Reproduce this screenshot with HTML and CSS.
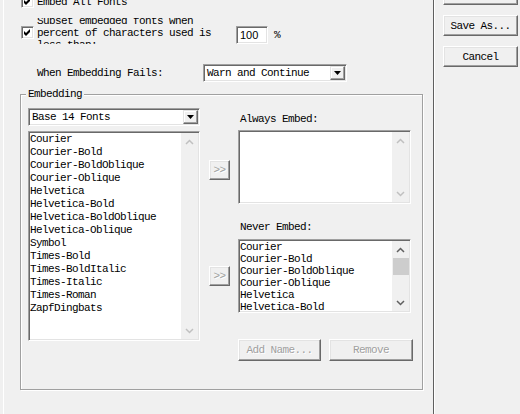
FILE: index.html
```html
<!DOCTYPE html>
<html>
<head>
<meta charset="utf-8">
<title>Fonts</title>
<link rel="stylesheet" href="styles.css">
</head>
<body>
<div class="dialog">
  <div class="panel">
    <div class="content">
      <div class="row row-embed">
        <span class="check"><svg width="9" height="9" viewBox="0 0 9 9"><polygon points="1,3 3,5 7,1 7,4 3,8 1,6" fill="#000"/></svg></span>
        <span class="label">Embed All Fonts</span>
      </div>
      <div class="row row-subset">
        <span class="check"><svg width="9" height="9" viewBox="0 0 9 9"><polygon points="1,3 3,5 7,1 7,4 3,8 1,6" fill="#000"/></svg></span>
        <div class="clip"><div class="clip-text">Subset embedded fonts when<br>percent of characters used is<br>less than:</div></div>
        <span class="textbox">100</span>
        <span class="pct">%</span>
      </div>
      <div class="row row-fails">
        <span class="fails-label">When Embedding Fails:</span>
        <div class="combo combo-fails">
          <span class="combo-text">Warn and Continue</span>
          <span class="combo-btn"><svg width="7" height="4" viewBox="0 0 7 4"><path d="M0 0h7L3.5 4z" fill="#000"/></svg></span>
        </div>
      </div>
      <fieldset class="group">
        <legend>Embedding</legend>
        <div class="group-body">
          <div class="col-left">
            <div class="combo combo-base">
              <span class="combo-text">Base 14 Fonts</span>
              <span class="combo-btn"><svg width="7" height="4" viewBox="0 0 7 4"><path d="M0 0h7L3.5 4z" fill="#000"/></svg></span>
            </div>
            <div class="listbox list-fonts">
              <ul class="items">
                <li>Courier</li>
                <li>Courier-Bold</li>
                <li>Courier-BoldOblique</li>
                <li>Courier-Oblique</li>
                <li>Helvetica</li>
                <li>Helvetica-Bold</li>
                <li>Helvetica-BoldOblique</li>
                <li>Helvetica-Oblique</li>
                <li>Symbol</li>
                <li>Times-Bold</li>
                <li>Times-BoldItalic</li>
                <li>Times-Italic</li>
                <li>Times-Roman</li>
                <li>ZapfDingbats</li>
              </ul>
              <div class="scrollbar sb-disabled">
                <span class="sb-btn"><svg width="9" height="6" viewBox="0 0 9 6"><path d="M1 5L4.5 1.5L8 5" fill="none" stroke="currentColor" stroke-width="1.5"/></svg></span>
                <span class="sb-track"></span>
                <span class="sb-btn"><svg width="9" height="6" viewBox="0 0 9 6"><path d="M1 1L4.5 4.5L8 1" fill="none" stroke="currentColor" stroke-width="1.5"/></svg></span>
              </div>
            </div>
          </div>
          <div class="col-mid">
            <button class="btn btn-move move-1" disabled>&gt;&gt;</button>
            <button class="btn btn-move move-2" disabled>&gt;&gt;</button>
          </div>
          <div class="col-right">
            <div class="caption caption-always">Always Embed:</div>
            <div class="listbox list-always">
              <ul class="items"></ul>
              <div class="scrollbar sb-disabled">
                <span class="sb-btn"><svg width="9" height="6" viewBox="0 0 9 6"><path d="M1 5L4.5 1.5L8 5" fill="none" stroke="currentColor" stroke-width="1.5"/></svg></span>
                <span class="sb-track"></span>
                <span class="sb-btn"><svg width="9" height="6" viewBox="0 0 9 6"><path d="M1 1L4.5 4.5L8 1" fill="none" stroke="currentColor" stroke-width="1.5"/></svg></span>
              </div>
            </div>
            <div class="caption caption-never">Never Embed:</div>
            <div class="listbox list-never">
              <ul class="items items-tight">
                <li>Courier</li>
                <li>Courier-Bold</li>
                <li>Courier-BoldOblique</li>
                <li>Courier-Oblique</li>
                <li>Helvetica</li>
                <li>Helvetica-Bold</li>
              </ul>
              <div class="scrollbar">
                <span class="sb-btn"><svg width="9" height="6" viewBox="0 0 9 6"><path d="M1 5L4.5 1.5L8 5" fill="none" stroke="currentColor" stroke-width="1.5"/></svg></span>
                <span class="sb-track"><span class="sb-thumb"></span></span>
                <span class="sb-btn"><svg width="9" height="6" viewBox="0 0 9 6"><path d="M1 1L4.5 4.5L8 1" fill="none" stroke="currentColor" stroke-width="1.5"/></svg></span>
              </div>
            </div>
            <div class="btn-row">
              <button class="btn btn-add" disabled>Add Name...</button>
              <button class="btn btn-remove" disabled>Remove</button>
            </div>
          </div>
        </div>
      </fieldset>
    </div>
  </div>
  <div class="sep"></div>
  <div class="side">
    <button class="btn side-btn side-first">OK</button>
    <button class="btn side-btn">Save As...</button>
    <button class="btn side-btn">Cancel</button>
  </div>
</div>
</body>
</html>
```

FILE: styles.css
```css
* { box-sizing: border-box; }
html, body { margin: 0; padding: 0; }
body {
  width: 520px;
  height: 414px;
  overflow: hidden;
  background: #f0f0f0;
  color: #000;
  font-family: "Liberation Mono", "DejaVu Sans Mono", monospace;
  font-size: 11px;
  letter-spacing: -0.6px;
  line-height: 12px;
}
.dialog { display: flex; height: 414px; }
.panel {
  flex: none;
  width: 430px;
  margin-left: 3px;
  border-left: 1px solid #ffffff;
}
.sep { flex: none; width: 1px; background: #5f5f5f; }
.side {
  flex: 1;
  border-left: 1px solid #ffffff;
  padding-left: 8px;
  display: flex;
  flex-direction: column;
  align-items: flex-start;
  gap: 10px;
}

.content { padding-left: 17px; margin-top: -5px; }
.row { display: flex; }
.row-embed { align-items: center; height: 13px; }
.check {
  flex: none;
  width: 13px;
  height: 13px;
  background: #fff;
  border: 1px solid;
  border-color: #a0a0a0 #ffffff #ffffff #a0a0a0;
  box-shadow: inset 1px 1px 0 #696969, inset -1px -1px 0 #e3e3e3;
  display: flex;
  align-items: center;
  justify-content: center;
}
.label { margin-left: 3px; white-space: nowrap; }
.row-subset { margin-top: 10px; align-items: flex-start; }
.row-subset .check { margin-top: 8px; }
.clip { flex: none; margin-left: 3px; width: 190px; height: 26px; overflow: hidden; }
.clip-text { margin-top: -3px; line-height: 12px; white-space: nowrap; }
.textbox {
  flex: none;
  margin-left: 9px;
  margin-top: 8px;
  width: 32px;
  height: 18px;
  background: #fff;
  border: 1px solid;
  border-color: #a0a0a0 #ffffff #ffffff #a0a0a0;
  box-shadow: inset 1px 1px 0 #696969, inset -1px -1px 0 #e3e3e3;
  font-family: "Liberation Sans", Arial, sans-serif;
  letter-spacing: 0;
  font-size: 11px;
  line-height: 16px;
  padding-left: 3px;
}
.pct { margin-left: 6px; margin-top: 8px; line-height: 18px; }
.row-fails { margin-top: 20px; align-items: center; height: 18px; }
.fails-label { flex: none; margin-left: 16px; width: 166px; white-space: nowrap; }

.combo {
  display: flex;
  height: 18px;
  background: #fff;
  border: 1px solid;
  border-color: #a0a0a0 #ffffff #ffffff #a0a0a0;
  padding: 1px;
  box-shadow: inset 1px 1px 0 #696969, inset -1px -1px 0 #e3e3e3;
}
.combo-fails { width: 144px; flex: none; }
.combo-base { width: 172px; }
.combo-text { flex: 1; padding-left: 2px; line-height: 14px; white-space: nowrap; }
.combo-btn {
  flex: none;
  width: 15px;
  background: #f0f0f0;
  border: 1px solid;
  border-color: #e3e3e3 #696969 #696969 #e3e3e3;
  box-shadow: inset -1px -1px 0 #a0a0a0, inset 1px 1px 0 #ffffff;
  display: flex;
  align-items: center;
  justify-content: center;
}

.group {
  margin: 6px 0 0 -1px;
  width: 403px;
  min-width: 0;
  padding: 8px 0 28px 7px;
  border: 1px solid #a0a0a0;
  box-shadow: inset 1px 1px 0 #ffffff, 1px 1px 0 #ffffff;
}
.group legend {
  margin-left: -2px;
  padding: 0 2px;
  line-height: 12px;
  background: #f0f0f0;
}
.group-body { display: flex; align-items: flex-start; }
.col-left { flex: none; width: 172px; display: flex; flex-direction: column; }
.col-mid { flex: none; margin-left: 9px; width: 21px; display: flex; flex-direction: column; }
.col-right { flex: none; margin-left: 8px; width: 175px; display: flex; flex-direction: column; }

.listbox {
  display: flex;
  background: #fff;
  border: 1px solid;
  border-color: #a0a0a0 #ffffff #ffffff #a0a0a0;
  padding: 1px;
  box-shadow: inset 1px 1px 0 #696969, inset -1px -1px 0 #e3e3e3;
}
.list-fonts { margin-top: 5px; height: 210px; }
.list-always { margin-top: 5px; width: 173px; height: 74px; }
.list-never { margin-top: 6px; width: 173px; height: 74px; }
.items { flex: 1; list-style: none; margin: 0; padding: 0; line-height: 13px; white-space: nowrap; overflow: hidden; }
.items-tight { line-height: 12px; }

.scrollbar {
  flex: none;
  width: 17px;
  display: flex;
  flex-direction: column;
  background: #f0f0f0;
  color: #606060;
}
.sb-disabled { color: #c0c0c0; }
.sb-btn { flex: none; height: 17px; display: flex; align-items: center; justify-content: center; }
.sb-track { flex: 1; display: flex; flex-direction: column; }
.sb-thumb { height: 17px; margin-left: 1px; background: #cdcdcd; }

.caption { margin-left: 2px; line-height: 12px; white-space: nowrap; }
.caption-always { margin-top: 5px; }
.caption-never { margin-top: 17px; }

.btn {
  font: inherit;
  letter-spacing: inherit;
  color: #000;
  background: #f0f0f0;
  border: 1px solid;
  border-color: #ffffff #696969 #696969 #ffffff;
  box-shadow: inset -1px -1px 0 #a0a0a0, inset 1px 1px 0 #e3e3e3;
  padding: 0;
  margin: 0;
  white-space: nowrap;
}
.btn:disabled { color: #a0a0a0; text-shadow: 1px 1px 0 #ffffff; }
.btn-move { width: 21px; height: 20px; }
.move-1 { margin-top: 52px; }
.move-2 { margin-top: 86px; }
.btn-row { margin-top: 26px; display: flex; gap: 8px; }
.btn-add { width: 83px; height: 22px; }
.btn-remove { width: 84px; height: 22px; }
.side-btn { width: 75px; height: 21px; flex: none; }
.side-first { margin-top: -16px; }
```
